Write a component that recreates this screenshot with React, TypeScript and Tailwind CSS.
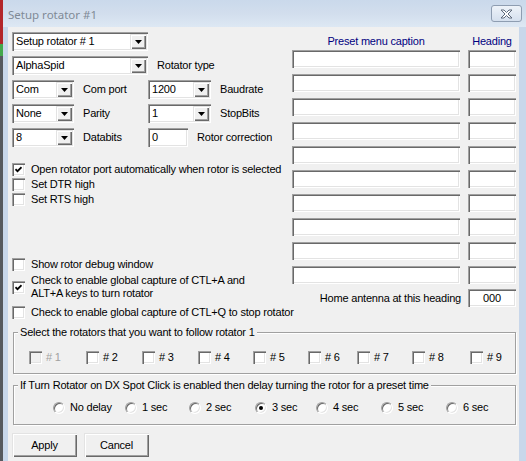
import React from 'react';

// classic 3D edges
const sunken =
  'shadow-[inset_1px_1px_0_#a0a0a0,inset_2px_2px_0_#696969,inset_-1px_-1px_0_#ffffff,inset_-2px_-2px_0_#e3e3e3]';
const raised =
  'shadow-[inset_1px_1px_0_#e3e3e3,inset_2px_2px_0_#ffffff,inset_-1px_-1px_0_#696969,inset_-2px_-2px_0_#a0a0a0]';
const etched = 'border border-[#a0a0a0] shadow-[inset_1px_1px_0_#ffffff,1px_1px_0_#ffffff]';

const Combo: React.FC<{ value: string; width: string }> = ({ value, width }) => (
  <div className={`${width} h-[19px] shrink-0 bg-white flex p-[2px] ${sunken}`}>
    <span className="flex-1 pl-[2px] leading-[15px] whitespace-nowrap overflow-hidden">{value}</span>
    <span className={`w-[16px] bg-[#f0f0f0] flex items-center justify-center ${raised}`}>
      <svg width="7" height="4" viewBox="0 0 7 4">
        <path d="M0 0h7L3.5 4z" fill="#000" />
      </svg>
    </span>
  </div>
);

const Box: React.FC<{ checked?: boolean; disabled?: boolean }> = ({ checked, disabled }) => (
  <span
    className={`w-[13px] h-[13px] shrink-0 flex items-center justify-center ${
      disabled ? 'bg-[#f0f0f0]' : 'bg-white'
    } ${sunken}`}
  >
    {checked && (
      <svg width="7" height="7" viewBox="0 0 7 7">
        <path d="M0.5 3.2L2.5 5.2L6.5 1.2" fill="none" stroke="#000" strokeWidth="1.7" />
      </svg>
    )}
  </span>
);

const Radio: React.FC<{ checked?: boolean }> = ({ checked }) => (
  <span className="w-[12px] h-[12px] shrink-0 rounded-full bg-white border border-t-[#a0a0a0] border-l-[#a0a0a0] border-r-[#ffffff] border-b-[#ffffff] shadow-[inset_1px_1px_0_#696969,inset_-1px_-1px_0_#e3e3e3] flex items-center justify-center">
    {checked && <span className="w-[4px] h-[4px] rounded-full bg-black" />}
  </span>
);

const CheckRow: React.FC<{ checked?: boolean; children: React.ReactNode }> = ({ checked, children }) => (
  <div className="h-[15px] flex items-center gap-[6px]">
    <Box checked={checked} />
    <span className="whitespace-nowrap">{children}</span>
  </div>
);

const rotators = [
  { label: '# 1', w: 'w-[57px]', disabled: true },
  { label: '# 2', w: 'w-[56px]' },
  { label: '# 3', w: 'w-[56px]' },
  { label: '# 4', w: 'w-[55px]' },
  { label: '# 5', w: 'w-[55px]' },
  { label: '# 6', w: 'w-[49px]' },
  { label: '# 7', w: 'w-[55px]' },
  { label: '# 8', w: 'w-[58px]' },
  { label: '# 9', w: 'w-[40px]' },
];

const delays = [
  { label: 'No delay', w: 'w-[72px]' },
  { label: '1 sec', w: 'w-[64px]' },
  { label: '2 sec', w: 'w-[66px]' },
  { label: '3 sec', w: 'w-[61px]', checked: true },
  { label: '4 sec', w: 'w-[65px]' },
  { label: '5 sec', w: 'w-[65px]' },
  { label: '6 sec', w: 'w-[50px]' },
];

export default function App() {
  return (
    <div className="w-[526px] h-[461px] flex overflow-hidden font-['Liberation_Sans',Arial,sans-serif] text-[11px] leading-[13px] tracking-[-0.2px] text-black">
      {/* desktop peeking at the left */}
      <div className="w-[3px] shrink-0 flex flex-col">
        <div className="h-[44px] bg-[#b3262a]" />
        <div className="h-[12px] bg-[#43a84c]" />
        <div className="flex-1 bg-[#56595e]" />
      </div>

      <div className="flex-1 flex flex-col bg-[#c8d7ea]">
        {/* title bar */}
        <div className="h-[27px] shrink-0 flex items-start justify-between pl-[5px] pr-[4px] bg-gradient-to-b from-[#cad9eb] via-[#d2deed] to-[#dde8f4]">
          <span className="mt-[7px] text-[11.5px] leading-[16px] tracking-normal text-[#808a96] font-['Noto_Sans',sans-serif]">
            Setup rotator #1
          </span>
          <span className="mt-[5px] w-[31px] h-[17px] rounded-[3px] border border-[#8e9db1] bg-gradient-to-b from-[#eef3f9] to-[#d5e0ee] flex items-center justify-center">
            <svg width="13" height="10" viewBox="0 0 13 10">
              <path
                d="M1 1h3l2.5 2.5L9 1h3L8 5l4 4H9L6.5 6.5 4 9H1l4-4z"
                fill="#ffffff"
                stroke="#5e6b7c"
                strokeWidth="1"
                strokeLinejoin="round"
              />
            </svg>
          </span>
        </div>

        <div className="flex-1 flex pl-[5px] pr-[7px]">
          <div className="flex-1 bg-[#f0f0f0] pl-[4px] pr-[3px]">
            <div className="flex">
              {/* left column */}
              <div className="w-[280px] shrink-0 pt-[5px] flex flex-col">
                <div className="flex flex-col gap-[5px]">
                  <Combo value="Setup rotator # 1" width="w-[136px]" />
                  <div className="flex items-center">
                    <Combo value="AlphaSpid" width="w-[136px]" />
                    <span className="ml-[9px]">Rotator type</span>
                  </div>
                  <div className="flex items-center">
                    <Combo value="Com" width="w-[62px]" />
                    <span className="w-[74px] pl-[9px]">Com port</span>
                    <Combo value="1200" width="w-[63px]" />
                    <span className="ml-[9px]">Baudrate</span>
                  </div>
                  <div className="flex items-center">
                    <Combo value="None" width="w-[62px]" />
                    <span className="w-[74px] pl-[9px]">Parity</span>
                    <Combo value="1" width="w-[63px]" />
                    <span className="ml-[9px]">StopBits</span>
                  </div>
                  <div className="flex items-center">
                    <Combo value="8" width="w-[62px]" />
                    <span className="w-[74px] pl-[9px]">Databits</span>
                    <div className={`w-[40px] h-[19px] bg-white pl-[4px] leading-[19px] ${sunken}`}>0</div>
                    <span className="ml-[9px]">Rotor correction</span>
                  </div>
                </div>

                <div className="mt-[15px]">
                  <CheckRow checked>Open rotator port automatically when rotor is selected</CheckRow>
                  <CheckRow>Set DTR high</CheckRow>
                  <CheckRow>Set RTS high</CheckRow>
                </div>

                <div className="mt-[50px]">
                  <CheckRow>Show rotor debug window</CheckRow>
                </div>
                <div className="mt-[2px] flex items-center gap-[6px]">
                  <Box checked />
                  <span>
                    Check to enable global capture of CTL+A and
                    <br />
                    ALT+A keys to turn rotator
                  </span>
                </div>
                <div className="mt-[5px]">
                  <CheckRow>Check to enable global capture of CTL+Q to stop rotator</CheckRow>
                </div>
              </div>

              {/* right column */}
              <div className="pt-[6px] flex flex-col">
                <div className="flex h-[16px] leading-[16px] text-[#000080]">
                  <span className="w-[168px] text-center">Preset menu caption</span>
                  <span className="w-[48px] ml-[8px] text-center">Heading</span>
                </div>
                <div className="mt-[1px] flex flex-col gap-[6px]">
                  {Array.from({ length: 10 }).map((_, i) => (
                    <div key={i} className="flex gap-[8px]">
                      <div className={`w-[168px] h-[18px] bg-white ${sunken}`} />
                      <div className={`w-[48px] h-[18px] bg-white ${sunken}`} />
                    </div>
                  ))}
                </div>
                <div className="mt-[5px] flex items-center justify-end gap-[7px]">
                  <span>Home antenna at this heading</span>
                  <div className={`w-[48px] h-[18px] bg-white text-center leading-[18px] ${sunken}`}>000</div>
                </div>
              </div>
            </div>

            {/* follow rotators group */}
            <div className={`relative mt-[12px] ml-[1px] w-[503px] h-[42px] pt-[17px] pl-[15px] flex ${etched}`}>
              <span className="absolute -top-[7px] left-[4px] px-[2px] bg-[#f0f0f0] whitespace-nowrap">
                Select the rotators that you want to follow rotator 1
              </span>
              {rotators.map((r) => (
                <div key={r.label} className={`${r.w} h-[15px] flex items-center gap-[4px]`}>
                  <Box disabled={r.disabled} />
                  <span className={r.disabled ? 'text-[#a0a0a0]' : ''}>{r.label}</span>
                </div>
              ))}
            </div>

            {/* delay group */}
            <div className={`relative mt-[11px] ml-[1px] w-[503px] h-[40px] pt-[14px] pl-[39px] flex ${etched}`}>
              <span className="absolute -top-[7px] left-[4px] px-[2px] bg-[#f0f0f0] whitespace-nowrap">
                If Turn Rotator on DX Spot Click is enabled then delay turning the rotor for a preset time
              </span>
              {delays.map((d) => (
                <div key={d.label} className={`${d.w} h-[15px] flex items-center gap-[5px]`}>
                  <Radio checked={d.checked} />
                  <span className="whitespace-nowrap">{d.label}</span>
                </div>
              ))}
            </div>

            <div className="mt-[8px] flex gap-[7px]">
              <button className={`w-[65px] h-[24px] bg-[#f0f0f0] ${raised}`}>Apply</button>
              <button className={`w-[65px] h-[24px] bg-[#f0f0f0] ${raised}`}>Cancel</button>
            </div>
          </div>
        </div>
      </div>
    </div>
  );
}
